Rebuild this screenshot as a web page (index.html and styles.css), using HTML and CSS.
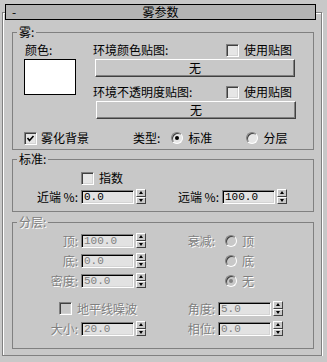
FILE: index.html
```html
<!DOCTYPE html>
<html lang="zh-CN">
<head>
<meta charset="UTF-8" />
<meta name="viewport" content="width=device-width, initial-scale=1.0">
<title>雾参数</title>
<link rel="stylesheet" href="styles.css">
</head>
<body>

  <div class="rollout">
    <div class="rollout-title">
      <span class="collapse">-</span>
      <span class="title-text">雾参数</span>
    </div>

    <!-- 雾 -->
    <fieldset class="group fog">
      <legend>雾:</legend>
      <div class="fog-body">
        <div class="color-col">
          <span class="color-label">颜色:</span>
          <div class="swatch"></div>
        </div>
        <div class="map-col">
          <div class="map-row">
            <span>环境颜色贴图:</span>
            <span class="check"><span class="box"></span>使用贴图</span>
          </div>
          <button class="map-btn">无</button>
          <div class="map-row second">
            <span>环境不透明度贴图:</span>
            <span class="check"><span class="box"></span>使用贴图</span>
          </div>
          <button class="map-btn second">无</button>
        </div>
        <div class="fog-options">
          <span class="check"><span class="box">
            <svg width="9" height="9" viewBox="0 0 9 9"><polyline points="1.5,4 3.5,6.5 7.5,2" fill="none" stroke="#000" stroke-width="1.6"/></svg>
          </span>雾化背景</span>
          <span class="type-label">类型:</span>
          <span class="radio first"><span class="dot on"></span>标准</span>
          <span class="radio second"><span class="dot"></span>分层</span>
        </div>
      </div>
    </fieldset>

    <!-- 标准 -->
    <fieldset class="group standard">
      <legend>标准:</legend>
      <div class="std-body">
        <div class="exp-row">
          <span class="check"><span class="box"></span>指数</span>
        </div>
        <div class="range-row">
          <span class="field-label">近端 %:</span>
          <span class="num">0.0</span>
          <span class="spin"><span class="up"></span><span class="down"></span></span>
          <span class="field-label far">远端 %:</span>
          <span class="num">100.0</span>
          <span class="spin"><span class="up"></span><span class="down"></span></span>
        </div>
      </div>
    </fieldset>

    <!-- 分层 (disabled) -->
    <fieldset class="group layered disabled">
      <legend>分层:</legend>
      <div class="layer-body">
        <div class="field">
          <span class="field-label">顶:</span>
          <span class="num">100.0</span>
          <span class="spin"><span class="up"></span><span class="down"></span></span>
        </div>
        <div class="field right">
          <span class="field-label">衰减:</span>
          <span class="radio"><span class="dot"></span>顶</span>
        </div>
        <div class="field">
          <span class="field-label">底:</span>
          <span class="num">0.0</span>
          <span class="spin"><span class="up"></span><span class="down"></span></span>
        </div>
        <div class="field right">
          <span class="field-label"></span>
          <span class="radio"><span class="dot"></span>底</span>
        </div>
        <div class="field">
          <span class="field-label">密度:</span>
          <span class="num">50.0</span>
          <span class="spin"><span class="up"></span><span class="down"></span></span>
        </div>
        <div class="field right">
          <span class="field-label"></span>
          <span class="radio"><span class="dot on"></span>无</span>
        </div>
        <div class="field horizon">
          <span class="check"><span class="box"></span>地平线噪波</span>
        </div>
        <div class="field right horizon">
          <span class="field-label">角度:</span>
          <span class="num">5.0</span>
          <span class="spin"><span class="up"></span><span class="down"></span></span>
        </div>
        <div class="field">
          <span class="field-label">大小:</span>
          <span class="num">20.0</span>
          <span class="spin"><span class="up"></span><span class="down"></span></span>
        </div>
        <div class="field right">
          <span class="field-label">相位:</span>
          <span class="num">0.0</span>
          <span class="spin"><span class="up"></span><span class="down"></span></span>
        </div>
      </div>
    </fieldset>
  </div>

</body>
</html>
```

FILE: styles.css
```css
body {
  margin: 0;
  background-color: #c8c8c8;
  color: #000;
  font-family: "Noto Sans CJK SC", "DejaVu Sans", sans-serif;
  font-size: 12px;
  line-height: 14px;
}

/* outer rollout frame */
.rollout {
  margin: 12px 0 0 2px;
  width: 318px;
  border: 1px solid #808080;
  box-shadow: inset 1px 1px 0 #fff, 1px 1px 0 #fff;
  padding-bottom: 6px;
}

.rollout-title {
  margin: -9px 0 0 2px;
  width: 309px;
  height: 14px;
  border: 1px solid #000;
  background-color: #b4b4b4;
  display: grid;
}
.rollout-title span {
  grid-area: 1 / 1;
}
.collapse {
  justify-self: start;
  padding-left: 6px;
}
.title-text {
  justify-self: center;
}

/* group boxes */
.group {
  margin: 6px 0 0 9px;
  padding: 0;
  width: 300px;
  border: 1px solid #808080;
  min-inline-size: 0;
}
.group legend {
  margin-left: 4px;
  padding: 0 2px;
  line-height: 12px;
}
.standard {
  margin-top: 3px;
}
.layered {
  margin-top: 4px;
}

.disabled,
.disabled .num {
  color: #808080;
}
.disabled legend,
.disabled .field-label,
.disabled .check,
.disabled .radio {
  text-shadow: 1px 1px 0 #fff;
}

/* 雾 */
.fog-body {
  display: grid;
  grid-template-columns: 69px 1fr;
  padding: 5px 0 4px 11px;
}
.color-label {
  display: block;
  padding-left: 1px;
}
.swatch {
  margin-top: 2px;
  width: 50px;
  height: 34px;
  border: 1px solid #000;
  background-color: #fff;
}
.map-row {
  display: flex;
  align-items: center;
  height: 14px;
}
.map-row.second {
  margin-top: 8px;
}
.map-row .check {
  margin-left: auto;
  margin-right: 21px;
}
.map-btn {
  display: block;
  margin: 2px 0 0 2px;
  width: 200px;
  height: 18px;
  padding: 0;
  font: inherit;
  color: #000;
  background-color: #c8c8c8;
  border: 1px solid;
  border-color: #fff #404040 #404040 #fff;
  box-shadow: inset -1px -1px 0 #808080;
}
.map-btn.second {
  margin-left: 3px;
}
.fog-options {
  grid-column: 1 / -1;
  display: flex;
  align-items: center;
  margin-top: 12px;
  height: 14px;
}
.type-label {
  margin-left: 44px;
}
.fog-options .radio.first {
  margin-left: 11px;
}
.fog-options .radio.second {
  margin-left: 34px;
}

/* checkbox + radio */
.check,
.radio {
  display: inline-flex;
  align-items: center;
  white-space: nowrap;
}
.box {
  box-sizing: border-box;
  width: 13px;
  height: 13px;
  margin-right: 5px;
  border: 1px solid;
  border-color: #808080 #fff #fff #808080;
  box-shadow: inset 1px 1px 0 #404040, inset -1px -1px 0 #d4d4d4;
  background-color: #e6e6e6;
  display: flex;
  align-items: center;
  justify-content: center;
}
.fog-options .box {
  margin-right: 4px;
}
.disabled .box {
  background-color: #c8c8c8;
}
.dot {
  box-sizing: border-box;
  width: 12px;
  height: 12px;
  margin-right: 5px;
  border-radius: 50%;
  border: 1px solid;
  border-color: #808080 #fff #fff #808080;
  box-shadow: inset 1px 1px 0 #404040;
  background-color: #e6e6e6;
  display: flex;
  align-items: center;
  justify-content: center;
}
.dot.on::after {
  content: "";
  width: 4px;
  height: 4px;
  border-radius: 50%;
  background-color: #000;
}
.disabled .dot {
  background-color: #c8c8c8;
}
.disabled .dot.on::after {
  background-color: #808080;
}

/* number fields with spinners */
.field-label {
  width: 65px;
  margin-right: 3px;
  text-align: right;
  white-space: pre;
}
.num {
  box-sizing: border-box;
  width: 53px;
  height: 14px;
  padding-left: 2px;
  border: 1px solid;
  border-color: #808080 #fff #fff #808080;
  box-shadow: inset 1px 1px 0 #000, inset -1px -1px 0 #d4d4d4;
  background-color: #e2e2e2;
  font-family: "Liberation Mono", monospace;
  font-size: 11px;
  line-height: 12px;
}
.spin {
  margin-left: 2px;
  width: 10px;
  height: 15px;
  display: flex;
  flex-direction: column;
}
.spin span {
  flex: 1;
  box-sizing: border-box;
  border: 1px solid;
  border-color: #fff #404040 #404040 #fff;
  background-color: #c8c8c8;
  display: flex;
  align-items: center;
  justify-content: center;
}
.spin .up::after,
.spin .down::after {
  content: "";
  border-left: 2px solid transparent;
  border-right: 2px solid transparent;
}
.spin .up::after {
  border-bottom: 3px solid #000;
}
.spin .down::after {
  border-top: 3px solid #000;
}

/* 标准 */
.std-body {
  padding: 6px 0 7px 0;
}
.exp-row {
  display: flex;
  padding-left: 68px;
  height: 14px;
  align-items: center;
}
.range-row {
  display: flex;
  align-items: center;
  margin-top: 4px;
  height: 15px;
}
.range-row .far {
  width: 73px;
}

/* 分层 */
.layer-body {
  display: grid;
  grid-template-columns: 167px 1fr;
  grid-template-rows: 15px 15px 15px 23px 15px;
  row-gap: 5px;
  padding: 5px 0 12px 0;
}
.field {
  display: flex;
  align-items: center;
}
.field.right .field-label {
  width: 35px;
}
.field.right .radio {
  margin-left: 7px;
}
.field.horizon {
  align-self: end;
  height: 15px;
}
.field.horizon .check {
  margin-left: 46px;
}
```
